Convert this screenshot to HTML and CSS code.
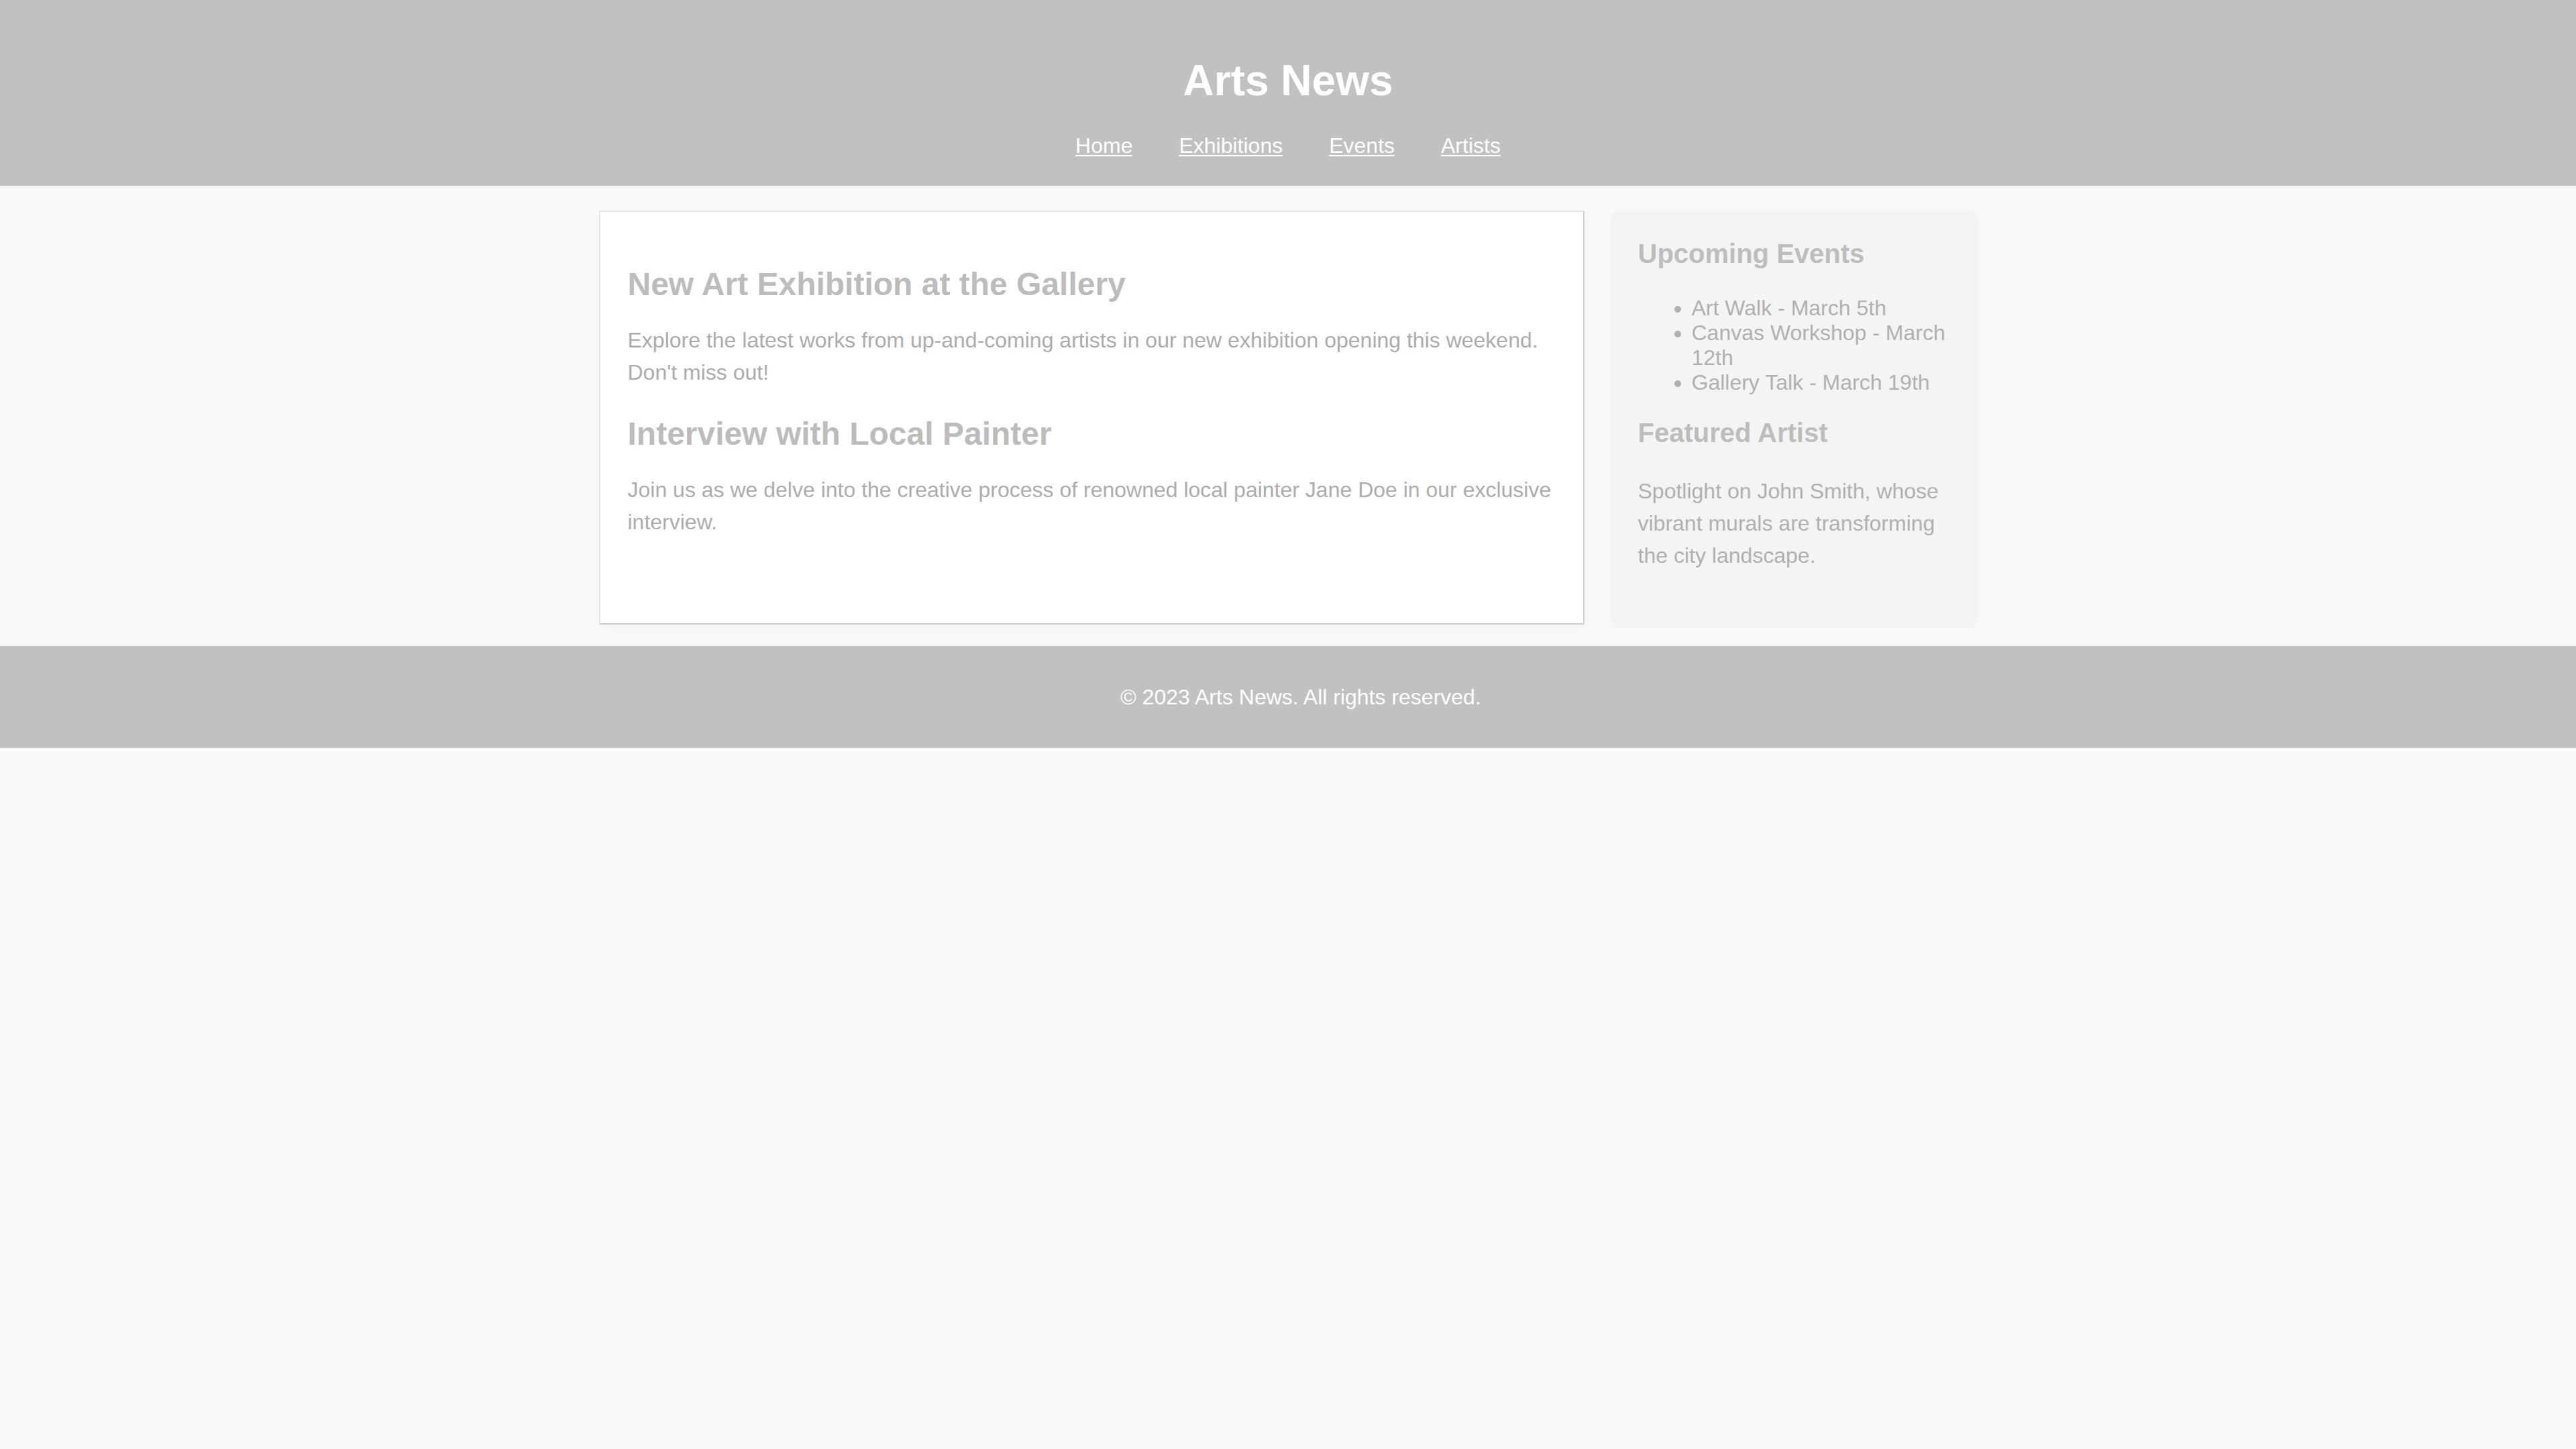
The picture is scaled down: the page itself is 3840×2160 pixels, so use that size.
FILE: index.html
```html
<!DOCTYPE html>
<html lang="en">
<head>
<meta charset="utf-8">
<title>Arts News</title>
<link rel="stylesheet" href="styles.css">
</head>
<body>
<header class="site-header">
  <h1 class="site-title">Arts News</h1>
  <nav class="site-nav">
    <a href="#">Home</a>
    <a href="#">Exhibitions</a>
    <a href="#">Events</a>
    <a href="#">Artists</a>
  </nav>
</header>
<main class="main">
  <div class="container">
    <section class="articles">
      <article class="article">
        <h2>New Art Exhibition at the Gallery</h2>
        <p>Explore the latest works from up-and-coming artists in our new exhibition opening this weekend. Don't miss out!</p>
      </article>
      <article class="article">
        <h2>Interview with Local Painter</h2>
        <p>Join us as we delve into the creative process of renowned local painter Jane Doe in our exclusive interview.</p>
      </article>
    </section>
    <aside class="sidebar">
      <h3>Upcoming Events</h3>
      <ul class="events">
        <li>Art Walk - March 5th</li>
        <li>Canvas Workshop - March 12th</li>
        <li>Gallery Talk - March 19th</li>
      </ul>
      <h3>Featured Artist</h3>
      <p>Spotlight on John Smith, whose vibrant murals are transforming the city landscape.</p>
    </aside>
  </div>
</main>
<footer class="site-footer">
  <p>&copy; 2023 Arts News. All rights reserved.</p>
</footer>
</body>
</html>
```
FILE: styles.css
```css
* {
  box-sizing: border-box;
}

html, body {
  margin: 0;
  padding: 0;
}

body {
  background: #fafafa;
  font-family: "Liberation Sans", Arial, sans-serif;
  font-size: 32px;
  line-height: 1.5;
  color: #ababab;
}

.site-header {
  background: #c1c1c1;
  text-align: center;
  padding: 83px 0 36px;
}

.site-title {
  margin: 0 0 36px;
  font-size: 64px;
  font-weight: bold;
  line-height: normal;
  color: #ffffff;
}

.site-nav {
  display: flex;
  justify-content: center;
  gap: 69px;
  line-height: 48px;
}

.site-nav a {
  color: #ffffff;
  text-decoration: underline;
  text-decoration-thickness: 2px;
  text-underline-offset: 3px;
}

.main {
  padding: 37px 0 32px;
}

.container {
  width: 2055px;
  margin: 0 auto;
  display: flex;
  gap: 40px;
  align-items: stretch;
}

.articles {
  flex: 1;
  background: #ffffff;
  border: 2px solid #e6e6e6;
  border-right-color: #d6d6d6;
  border-bottom-color: #cdcdcd;
  box-shadow: 4px 6px 14px rgba(0, 0, 0, 0.035);
  padding: 40px 41px 40px;
}

.article h2 {
  margin: 40px 0 32px;
  font-size: 48px;
  font-weight: bold;
  line-height: normal;
  color: #bcbcbc;
}

.article p {
  margin: 32px 0;
  color: #acacac;
}

.sidebar {
  width: 546px;
  flex: none;
  background: #f4f4f4;
  border-radius: 10px;
  box-shadow: 0 4px 16px rgba(0, 0, 0, 0.04);
  padding: 42px 18px 79px 40px;
  color: #b0b0b0;
}

.sidebar h3 {
  margin: 0 0 40px;
  font-size: 40px;
  font-weight: bold;
  line-height: normal;
  color: #bdbdbd;
}

.events {
  margin: 0 0 34px;
  padding-left: 80px;
  line-height: normal;
}

.sidebar p {
  margin: 0;
  line-height: 48px;
}

.site-footer {
  background: #c1c1c1;
  color: #ffffff;
  text-align: center;
  padding: 52px 0 52px 38px;
}

.site-footer p {
  margin: 0;
  line-height: 48px;
}
```
